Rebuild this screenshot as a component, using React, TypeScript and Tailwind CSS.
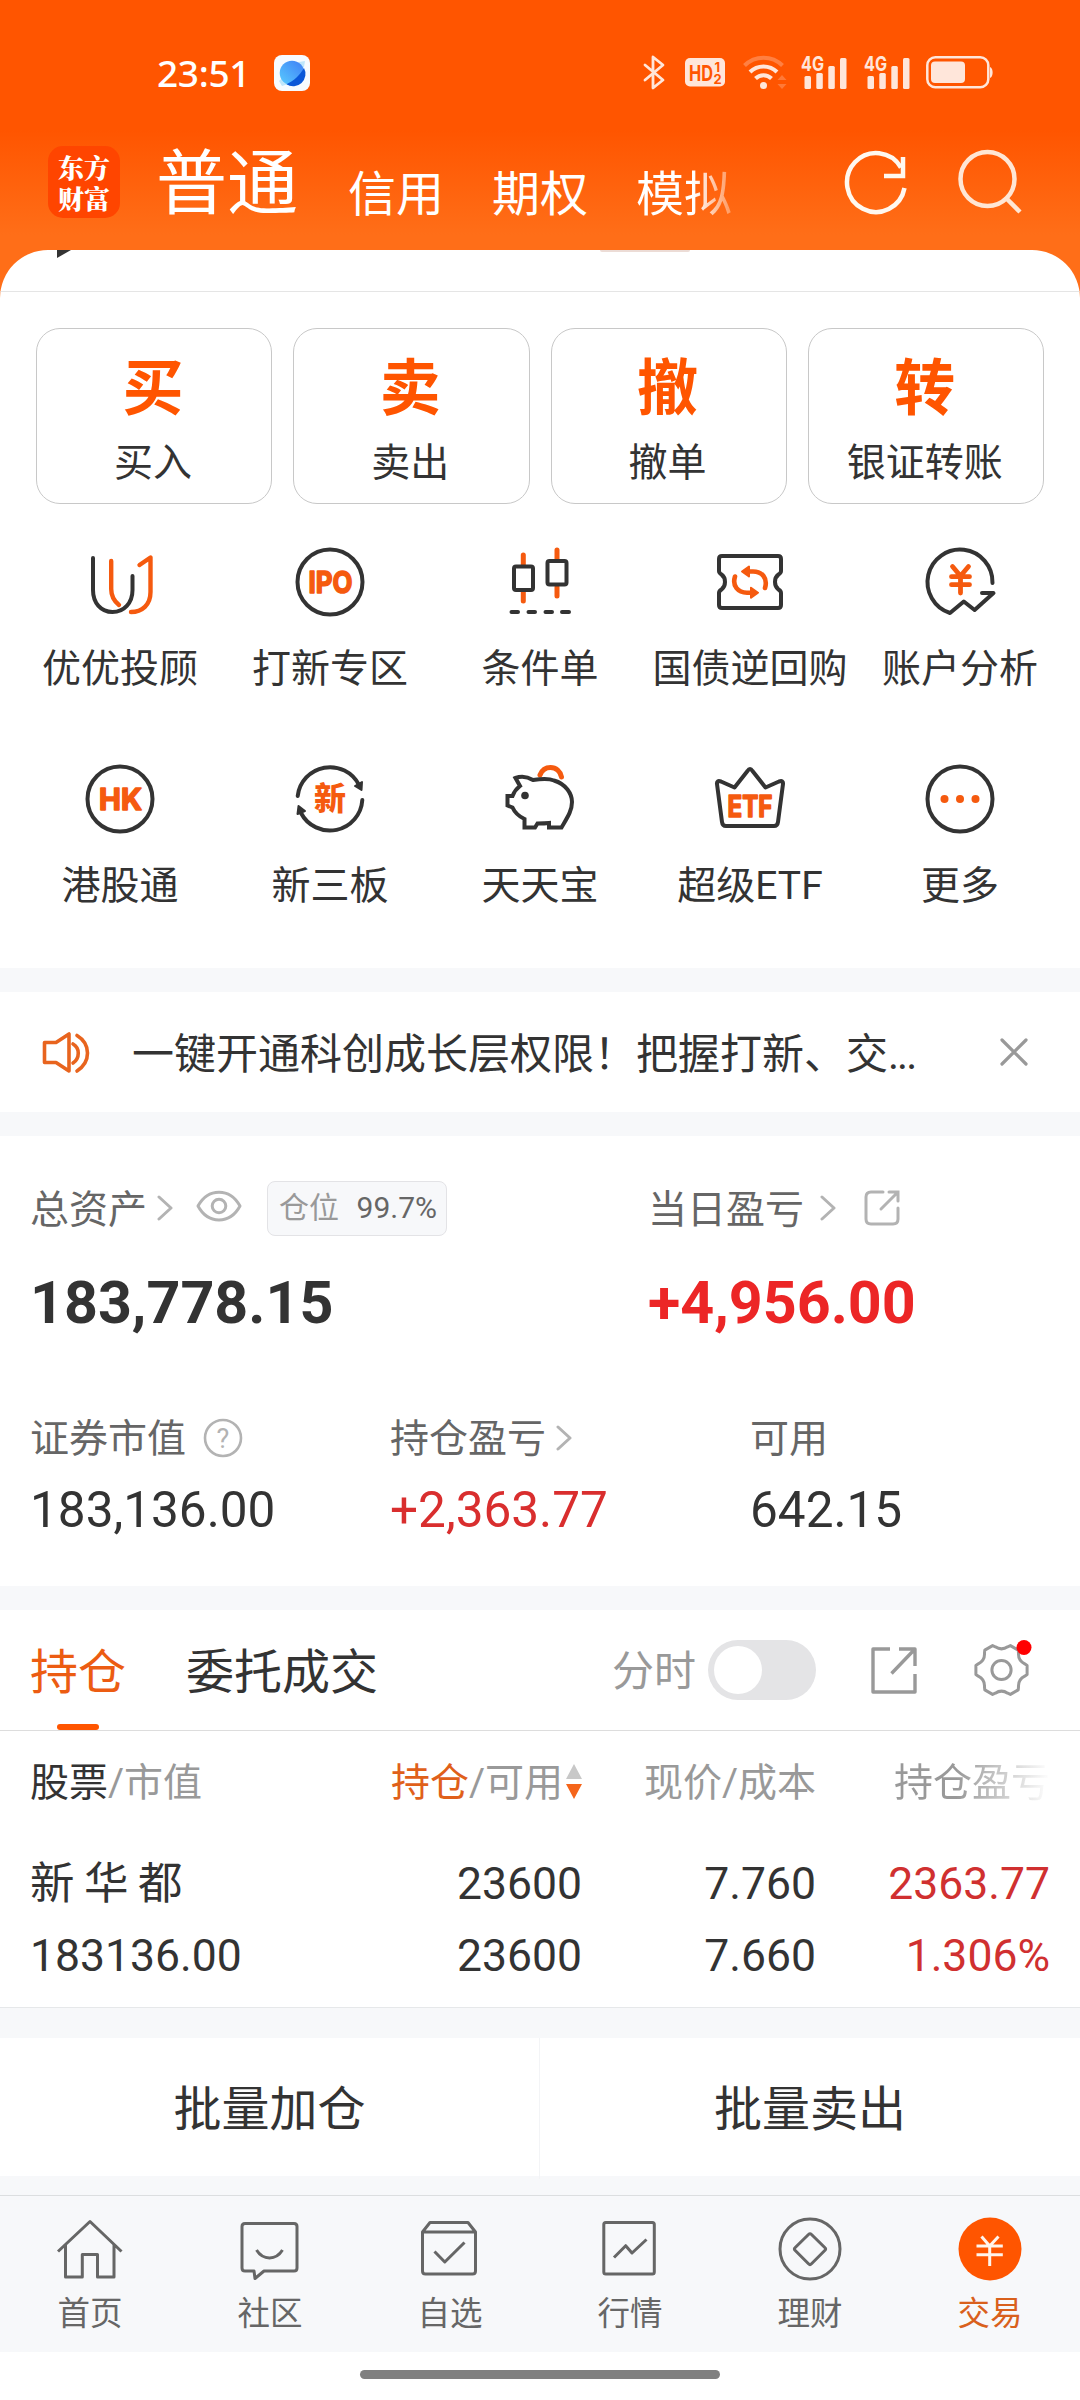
import type { ReactNode } from "react";

const DARK = "#333333";
const ORANGE = "#f55a0f";

const LATIN_FONT = { fontFamily: "Inter, Roboto, sans-serif" };
const CJK_FONT = { fontFamily: '"Noto Sans CJK SC", sans-serif' };

function StatusBar() {
  return (
    <div className="flex h-[128px] items-center pl-[157px] pt-[17px] pr-[86px] text-[#ffe6da]">
      <span className="w-[90px] font-['Noto_Sans'] text-[37px] font-medium leading-[40px] tracking-[-0.3px] text-white">23:51</span>
      <svg className="ml-[27px]" width="36" height="36" viewBox="0 0 36 36">
        <defs>
          <linearGradient id="planet" x1="0" y1="1" x2="1" y2="0">
            <stop offset="0" stopColor="#59ccff" />
            <stop offset="1" stopColor="#3f7df5" />
          </linearGradient>
        </defs>
        <rect width="36" height="36" rx="8" fill="#f7fbff" />
        <path d="M5 26L8 31L14 29L30 12L31 6L25 7Z" fill="#bfe6fb" />
        <circle cx="18" cy="18" r="12.3" fill="url(#planet)" />
        <path d="M30 13A12.3 12.3 0 0 1 12.5 29.2C20 26 26 20 30 13Z" fill="#0a57d8" />
      </svg>
      <div className="ml-auto flex items-center">
        <svg width="22" height="35" viewBox="0 0 22 35" fill="none" stroke="currentColor" strokeWidth="2.8" strokeLinejoin="round" strokeLinecap="round">
          <path d="M2 10L20 25L10 33V2L20 10L2 25" />
        </svg>
        <svg className="ml-5 overflow-visible" width="40" height="29" viewBox="0 0 40 29">
          <rect width="40" height="28.5" rx="5" fill="currentColor" />
          <g fill="#ff5500" style={LATIN_FONT} fontWeight="700">
            <text x="4" y="22.5" fontSize="22" textLength="24" lengthAdjust="spacingAndGlyphs">HD</text>
            <text x="29.5" y="13.5" fontSize="13">1</text>
            <text x="28.5" y="25.5" fontSize="13">2</text>
          </g>
        </svg>
        <svg className="ml-[18px]" width="44" height="35" viewBox="0 0 44 35" fill="none" stroke="currentColor" strokeWidth="4">
          <path d="M1.5 10.5C12 0 29 0 39.5 10.5" opacity=".3" />
          <path d="M7 17C14.5 9.500 26.500 9.500 34 17" />
          <path d="M12.500 23.500C17 19 24 19 28.500 23.500" />
          <circle cx="20.500" cy="30.500" r="3.500" fill="currentColor" stroke="none" />
          <path d="M39 20L43.500 25H34.500ZM39 34L43.500 29H34.500Z" fill="currentColor" stroke="none" opacity=".25" />
        </svg>
        <Signal className="ml-[14px] overflow-visible" />
        <Signal className="ml-[17px] overflow-visible" />
        <svg className="ml-4" width="68" height="33" viewBox="0 0 68 33">
          <rect x="1.300" y="1.300" width="61" height="30" rx="8" fill="none" stroke="currentColor" strokeWidth="2.500" />
          <rect x="5" y="5.500" width="34" height="21.500" rx="4" fill="currentColor" />
          <path d="M64 11C67.500 12 67.500 21 64 22Z" fill="currentColor" />
        </svg>
      </div>
    </div>
  );
}

function Signal({ className }: { className: string }) {
  return (
    <svg className={className} width="46" height="34" viewBox="0 0 46 34" fill="currentColor">
      <text x="0" y="15" fontSize="20" fontWeight="700" textLength="23" lengthAdjust="spacingAndGlyphs" style={LATIN_FONT}>4G</text>
      <rect x="3.500" y="20" width="6.500" height="13" rx="1.500" />
      <rect x="15.300" y="17" width="6.500" height="16" rx="1.500" />
      <rect x="27.300" y="10" width="6.500" height="23" rx="1.500" />
      <rect x="39" y="2" width="6.500" height="31" rx="1.500" />
    </svg>
  );
}

function Header() {
  return (
    <div className="flex h-[122px] items-start text-white">
      <div className="ml-12 mt-[18px] flex h-[72px] w-[72px] flex-col items-center justify-center rounded-[15px] bg-[#ff4500] font-['Noto_Serif_CJK_SC','Noto_Sans_CJK_SC',serif] text-[26px] font-black leading-[31px]">
        <span>东方</span>
        <span>财富</span>
      </div>
      <span className="ml-[36px] mt-[12px] text-[71px] leading-[88px]">普通</span>
      <nav className="ml-[50px] mt-[37px] flex gap-12 text-[48px] leading-[60px]">
        <span>信用</span>
        <span>期权</span>
        <span className="bg-linear-to-r from-white from-60% to-[#ffffff50] bg-clip-text text-transparent">模拟</span>
      </nav>
      <svg className="ml-[112px] mt-[20px]" width="64" height="68" viewBox="0 0 64 68" fill="none" stroke="#fff8f0" strokeWidth="4.500">
        <path d="M60.500 40A29 29.500 0 1 1 57 19.500" />
        <path d="M59 9V28H40" />
      </svg>
      <svg className="ml-[50px] mt-[24px] overflow-visible" width="64" height="64" viewBox="0 0 64 64" fill="none" stroke="#ffe6d4" strokeWidth="4.500">
        <circle cx="29.500" cy="27" r="27" />
        <path d="M48 46L62 60" />
      </svg>
    </div>
  );
}

const actions = [
  { glyph: "买", label: "买入" },
  { glyph: "卖", label: "卖出" },
  { glyph: "撤", label: "撤单" },
  { glyph: "转", label: "银证转账" },
];

function ActionCards() {
  return (
    <div className="grid grid-cols-4 gap-[21px] px-9 pt-9">
      {actions.map((a) => (
        <button key={a.label} className="flex h-[176px] flex-col items-center rounded-[24px] border border-[#c8c8c8] pt-[22px] pr-[2px]">
          <span className="text-[61px] font-bold leading-[76px] text-[#ff5500]">{a.glyph}</span>
          <span className="mt-[10px] text-[39px] leading-[52px] text-[#333]">{a.label}</span>
        </button>
      ))}
    </div>
  );
}

function MenuIcon({ children }: { children: ReactNode }) {
  return (
    <svg width="72" height="72" viewBox="0 0 72 72" fill="none" stroke={DARK} strokeWidth="4" strokeLinecap="round" strokeLinejoin="round" className="overflow-visible">
      {children}
    </svg>
  );
}

const roundText = {
  fill: ORANGE,
  stroke: ORANGE,
  strokeWidth: 1.6,
  fontWeight: 700,
  fontSize: 30,
  lengthAdjust: "spacingAndGlyphs" as const,
  style: LATIN_FONT,
};

const menu: { label: string; icon: ReactNode }[] = [
  {
    label: "优优投顾",
    icon: (
      <>
        <path d="M9 12V44C9 57 17 66 28.500 66S48.500 57 48.500 44V30" />
        <path d="M27.200 15V43C27.200 50 30 55 35 59M55.500 19L66.500 11.500V46C66.500 59 58 66 47 66" stroke={ORANGE} strokeWidth="4.400" />
      </>
    ),
  },
  {
    label: "打新专区",
    icon: (
      <>
        <circle cx="36" cy="36" r="32.500" />
        <text x="14.500" y="46.700" textLength="44" {...roundText}>IPO</text>
      </>
    ),
  },
  {
    label: "条件单",
    icon: (
      <>
        <path d="M19.300 9V19M19.300 45V55M53 4V13M53 41V50" stroke={ORANGE} strokeWidth="5" />
        <rect x="10" y="20.500" width="19" height="23.500" rx="2" />
        <rect x="43.500" y="15" width="19" height="23.500" rx="2" />
        <path d="M7.500 66H14M24.500 66H31M41.500 66H48M58 66H65" />
      </>
    ),
  },
  {
    label: "国债逆回购",
    icon: (
      <>
        <path d="M8 10H64Q67 10 67 13V25Q67 27 64.500 28.500Q61 31 61 36Q61 41 64.500 43.500Q67 45 67 47V59Q67 62 64 62H8Q5 62 5 59V47Q5 45 7.500 43.500Q11 41 11 36Q11 31 7.500 28.500Q5 27 5 25V13Q5 10 8 10Z" />
        <g stroke={ORANGE} strokeWidth="4.600">
          <path d="M34 25.500H39C48 25.500 54 32 51 42M38 46.700H33C24 46.700 18 40 21 30.500" />
          <path d="M35 20.500V30.500L28 25.500ZM37 41.700V51.700L44 46.700Z" fill={ORANGE} strokeWidth="2" />
        </g>
      </>
    ),
  },
  {
    label: "账户分析",
    icon: (
      <>
        <path d="M68.500 37A32.500 32.500 0 1 0 26 67L39.800 55.500L50.600 64L69.500 47H58" />
        <path d="M28.500 20.500L36.500 30L44.500 20.500M27.500 30.700H45.500M27.500 38.700H45.500M36.500 30V47" stroke={ORANGE} strokeWidth="4.800" />
      </>
    ),
  },
  {
    label: "港股通",
    icon: (
      <>
        <circle cx="36" cy="36" r="32.500" />
        <text x="15" y="46.700" textLength="43" {...roundText}>HK</text>
      </>
    ),
  },
  {
    label: "新三板",
    icon: (
      <>
        <path d="M3.700 33A32.500 32.500 0 0 1 65 22M68.300 37A32.500 32.500 0 0 1 7 50" />
        <path d="M61 23L68 19L67.500 27ZM11 48L3.500 51L4.500 43Z" fill={DARK} strokeWidth="2" />
        <text x="36" y="47" fontSize="32" fontWeight="900" textAnchor="middle" fill={ORANGE} stroke="none" style={CJK_FONT}>新</text>
      </>
    ),
  },
  {
    label: "天天宝",
    icon: (
      <>
        <path d="M36 12C38 7 42 4.500 46.500 4.500C52 4.500 56.500 8.500 57.500 14" stroke={ORANGE} strokeWidth="5" />
        <path strokeLinejoin="miter" d="M16 23L11.500 15C17 13 24 14 29 17C36 16 44 15 50 17.500C62 21 68 31 68 39C68 48 63 55 57.500 64.500H45V60C41 60.500 37 60.500 33.500 60.500L31 64.500H20.500V56C14 53 11 50 8.500 44.500L3.500 42.500V33H8.500C10 29 12 26 16 23Z" />
        <circle cx="21" cy="32.500" r="3.800" fill={DARK} stroke="none" />
      </>
    ),
  },
  {
    label: "超级ETF",
    icon: (
      <>
        <path d="M33.500 8Q36 4 38.500 8L51.500 24.500L65 18.500Q69.500 17 69 21L64 59Q63.500 63 60 63H12Q8.500 63 8 59L3 21Q2.500 17 7 18.500L20.500 24.500Z" />
        <text x="13.500" y="53.500" textLength="45" {...roundText}>ETF</text>
      </>
    ),
  },
  {
    label: "更多",
    icon: (
      <>
        <circle cx="36" cy="36" r="32.500" />
        <g fill={ORANGE} stroke="none">
          <circle cx="20.500" cy="36" r="4" />
          <circle cx="36" cy="36" r="4" />
          <circle cx="51.500" cy="36" r="4" />
        </g>
      </>
    ),
  },
];

function MenuGrid() {
  return (
    <div className="grid grid-cols-5 gap-y-[41px] px-[15px] pb-[29px] pt-[42px]">
      {menu.map((m) => (
        <div key={m.label} className="flex h-[176px] flex-col items-center">
          <MenuIcon>{m.icon}</MenuIcon>
          <span className="mt-[25px] whitespace-nowrap text-[39px] leading-[52px] text-[#333]">{m.label}</span>
        </div>
      ))}
    </div>
  );
}

function Notice() {
  return (
    <div className="flex h-[120px] items-center bg-white pl-[42px] pr-[52px]">
      <svg width="48" height="44" viewBox="0 0 48 44" fill="none" stroke="#e8641e" strokeWidth="3.600" strokeLinecap="round" strokeLinejoin="round">
        <path d="M2.500 12.500H14L27 4V41L14 32.500H2.500Z" />
        <path d="M31 14C38 18 38 28 31 33M35 5.500C49 14 49 32 35 41" />
      </svg>
      <span className="ml-[42px] mt-[5px] flex-1 whitespace-nowrap text-[42px] leading-[60px] text-[#333]">
        一键开通科创成长层权限！把握打新、交<span className="tracking-[-2px]">...</span>
      </span>
      <svg width="28" height="28" viewBox="0 0 28 28" stroke="#999" strokeWidth="3.200" strokeLinecap="round">
        <path d="M2 2L26 26M26 2L2 26" />
      </svg>
    </div>
  );
}

function Chevron({ className }: { className: string }) {
  return (
    <svg className={className} width="16" height="26" viewBox="0 0 16 26" fill="none" stroke="#b3b3b3" strokeWidth="3" strokeLinecap="round" strokeLinejoin="round">
      <path d="M2 2L14 13L2 24" />
    </svg>
  );
}

function Assets() {
  return (
    <section className="h-[450px] bg-white pl-[30px]">
      <div className="flex pt-[44px]">
        <div className="w-[618px]">
          <div className="flex h-[56px] items-center text-[39px] leading-[56px] text-[#666]">
            <span className="mt-[4px]">总资产</span>
            <Chevron className="ml-[10px]" />
            <svg className="ml-[23px] mt-[-4px]" width="46" height="32" viewBox="0 0 46 32" fill="none" stroke="#b3b3b3" strokeWidth="3">
              <path d="M2 16C12 -2.500 34 -2.500 44 16C34 34.500 12 34.500 2 16Z" strokeLinejoin="round" />
              <circle cx="23" cy="16" r="6.800" />
            </svg>
            <span className="ml-[25px] flex h-[55px] w-[180px] items-center justify-between rounded-lg border border-[#e3e3e6] bg-[#f7f8fa] pl-[11px] pr-[9px] text-[30px] leading-[40px]">
              <span className="text-[#999]">仓位</span>
              <span>99.7%</span>
            </span>
          </div>
          <div className="mt-[31px] text-[59.2px] font-bold leading-[72px] text-[#333]">183,778.15</div>
        </div>
        <div>
          <div className="flex h-[56px] items-center text-[39px] leading-[56px] text-[#666]">
            <span className="mt-[4px]">当日盈亏</span>
            <Chevron className="ml-[16px]" />
            <svg className="ml-[28px]" width="36" height="36" viewBox="0 0 36 36" fill="none" stroke="#b3b3b3" strokeWidth="3" strokeLinecap="round">
              <path d="M19 2H7Q2 2 2 7V29Q2 34 7 34H29Q34 34 34 29V18M25 2H34V11M33 3L17 19" />
            </svg>
          </div>
          <div className="mt-[31px] text-[59.2px] font-bold leading-[72px] text-[#ec2626]">+4,956.00</div>
        </div>
      </div>
      <div className="mt-[72px] flex">
        <div className="w-[360px]">
          <div className="flex h-[56px] items-center text-[39px] leading-[56px] text-[#666]">
            <span>证券市值</span>
            <svg className="ml-[17px] mt-[-3px]" width="40" height="40" viewBox="0 0 40 40">
              <circle cx="20" cy="20" r="18" fill="none" stroke="#b3b3b3" strokeWidth="2.600" />
              <text x="20" y="29.500" textAnchor="middle" fontSize="27" fill="#b3b3b3" style={{ fontFamily: "Roboto, sans-serif" }}>?</text>
            </svg>
          </div>
          <div className="mt-[15px] text-[49.5px] leading-[56px] text-[#333]">183,136.00</div>
        </div>
        <div className="w-[360px]">
          <div className="flex h-[56px] items-center text-[39px] leading-[56px] text-[#666]">
            <span>持仓盈亏</span>
            <Chevron className="ml-[10px] mt-[-3px]" />
          </div>
          <div className="mt-[15px] text-[49.5px] leading-[56px] text-[#d92e2e]">+2,363.77</div>
        </div>
        <div>
          <div className="h-[56px] text-[39px] leading-[56px] text-[#666]">可用</div>
          <div className="mt-[15px] text-[49.5px] leading-[56px] text-[#333]">642.15</div>
        </div>
      </div>
    </section>
  );
}

// Outline with six flat teeth joined by concave curves.
function gearPath(cx: number, cy: number) {
  const at = (deg: number, r: number) => {
    const a = (deg * Math.PI) / 180;
    return `${(cx + r * Math.cos(a)).toFixed(1)} ${(cy + r * Math.sin(a)).toFixed(1)}`;
  };
  let d = `M${at(-10, 26)}`;
  for (let k = 0; k < 6; k++) {
    const t = k * 60;
    d += `L${at(t + 10, 26)}L${at(t + 15, 24)}Q${at(t + 30, 19)} ${at(t + 45, 24)}L${at(t + 50, 26)}`;
  }
  return d + "Z";
}

function HoldingsTabs() {
  return (
    <div className="flex h-[121px] border-b border-[#dddddd] bg-white pl-[30px]">
      <div className="relative h-[120px] text-[48px] leading-[60px] text-[#ec5c12]">
        <span className="block pt-[33px]">持仓</span>
        <span className="absolute bottom-0 left-[27px] h-[6px] w-[42px] rounded-full bg-[#ff5500]" />
      </div>
      <span className="ml-[60px] pt-[33px] text-[48px] leading-[60px] text-[#333]">委托成交</span>
      <div className="ml-auto flex h-[120px] items-center pr-[48px]">
        <span className="mt-[4px] text-[42px] leading-[60px] text-[#999]">分时</span>
        <span className="ml-[12px] flex h-[60px] w-[108px] items-center rounded-full bg-[#e4e4e6] pl-[6px]">
          <span className="h-[48px] w-[48px] rounded-full bg-white" />
        </span>
        <svg className="ml-[55px]" width="47" height="47" viewBox="0 0 47 47" fill="none" stroke="#999" strokeWidth="3.400" strokeLinejoin="round">
          <path d="M19 2H2V45H44V27M28 2H44V19M43 3L20.500 26.500" />
        </svg>
        <svg className="ml-[56px]" width="58" height="62" viewBox="0 0 58 62" fill="none" stroke="#999" strokeWidth="3" strokeLinejoin="round">
          <path d={gearPath(27.5, 31)} />
          <circle cx="27.500" cy="31" r="9.600" />
          <circle cx="50" cy="8.500" r="7.500" fill="#ff0000" stroke="none" />
        </svg>
      </div>
    </div>
  );
}

function HoldingsTable() {
  const cols = "grid grid-cols-[301px_251px_234px_234px]";
  return (
    <div className="h-[277px] border-b border-[#e6e8ea] bg-white pl-[30px]">
      <div className={`${cols} pt-[24px] text-[39px] leading-[56px] text-[#999]`}>
        <div>
          <span className="text-[#333]">股票</span>/市值
        </div>
        <div className="flex items-center justify-end">
          <span className="text-[#e0601a]">持仓</span>
          <span>/可用</span>
          <svg className="ml-[3px] mt-[-2px]" width="16" height="36" viewBox="0 0 16 36">
            <path d="M8 0L16 15H0Z" fill="#c8c8c8" />
            <path d="M0 20H16L8 35Z" fill="#f5651a" />
          </svg>
        </div>
        <div className="text-right">现价/成本</div>
        <div className="text-right">
          <span className="bg-linear-to-r from-[#999] from-40% to-[#99999900] bg-clip-text text-transparent">持仓盈亏</span>
        </div>
      </div>
      <div className={`${cols} pt-[43px] text-[44.5px] leading-[60px] text-[#333]`}>
        <div className="[word-spacing:-1.5px]">新 华 都</div>
        <div className="text-right">23600</div>
        <div className="text-right">7.760</div>
        <div className="text-right text-[#d03030]">2363.77</div>
      </div>
      <div className={`${cols} pt-[12px] text-[44.5px] leading-[60px] text-[#333]`}>
        <div>183136.00</div>
        <div className="text-right">23600</div>
        <div className="text-right">7.660</div>
        <div className="text-right text-[#d03030]">1.306%</div>
      </div>
    </div>
  );
}

function TabIcon({ children }: { children: ReactNode }) {
  return (
    <svg width="72" height="72" viewBox="0 0 72 72" fill="none" stroke="#666" strokeWidth="3" strokeLinejoin="round">
      {children}
    </svg>
  );
}

const tabs: { label: string; active?: boolean; icon: ReactNode }[] = [
  { label: "首页", icon: <path d="M4 38.500L36 8.500L67.500 38.500M11.500 32V64H28.300V41.500H43.500V64H60V32" /> },
  {
    label: "社区",
    icon: <path d="M11 10.500H60Q63 10.500 63 13.500V55Q63 58 60 58H30L21 65.500L20 58H11Q8 58 8 55V13.500Q8 10.500 11 10.500ZM22.500 37C29 47.500 42 47.500 48.500 37" />,
  },
  {
    label: "自选",
    icon: <path d="M8.500 19L16 9.500H54L61.500 19V58Q61.500 61 58.500 61H11.500Q8.500 61 8.500 58ZM8.500 19H61.500M20.500 38.500L30.800 49L50.500 29.500" />,
  },
  {
    label: "行情",
    icon: (
      <>
        <rect x="9.800" y="9.500" width="50.500" height="51.500" rx="2" />
        <path d="M20 44.500L31.700 32.700L38 40L52.500 26.500" />
      </>
    ),
  },
  {
    label: "理财",
    icon: (
      <>
        <circle cx="36" cy="36" r="30" />
        <path d="M34.500 21.500Q36 20 37.500 21.500L51 34.800Q52.300 36 51 37.300L37.500 50.800Q36 52.300 34.500 50.800L21 37.300Q19.700 36 21 34.800Z" />
      </>
    ),
  },
  {
    label: "交易",
    active: true,
    icon: (
      <>
        <circle cx="36" cy="36" r="31.500" fill="#ff5500" stroke="none" />
        <path d="M27.500 23.500L35.700 33L44.500 23.500M22.500 33H48.800M22.500 41.700H48.800M35.700 33V53" stroke="#fff4ec" />
      </>
    ),
  },
];

function BottomNav() {
  return (
    <>
      <nav className="grid h-[157px] grid-cols-6 border-t border-[#dcdee0] bg-[#f7f8fa] pt-[17px]">
        {tabs.map((t) => (
          <div key={t.label} className="flex flex-col items-center">
            <TabIcon>{t.icon}</TabIcon>
            <span className={t.active ? "mt-[7px] text-[32.5px] leading-[44px] text-[#d9601c]" : "mt-[7px] text-[32.5px] leading-[44px] text-[#666]"}>{t.label}</span>
          </div>
        ))}
      </nav>
      <div className="h-[48px] bg-white pt-[18px]">
        <div className="mx-auto h-[9px] w-[360px] rounded-full bg-[#808080]" />
      </div>
    </>
  );
}

export default function App() {
  return (
    <main className="h-[2400px] w-[1080px] overflow-hidden bg-[#f7f8fa] font-[Roboto,'Noto_Sans_CJK_SC',sans-serif]">
      <div className="bg-[linear-gradient(to_bottom,#ff5500_130px,#ff6e18_235px)]">
        <div className="h-[250px]">
          <StatusBar />
          <Header />
        </div>
        <div className="overflow-hidden rounded-t-[48px] bg-white">
          <div className="flex h-[42px] items-start border-b border-[#e5e5e5]">
            <svg className="ml-[57px]" width="14" height="8" viewBox="0 0 14 8">
              <path d="M0 0H14L0 8Z" fill="#333" />
            </svg>
            <span className="ml-[529px] h-[2px] w-[90px] rounded-b-full bg-[#ecdcd6]" />
          </div>
          <ActionCards />
          <MenuGrid />
        </div>
      </div>
      <div className="mt-6">
        <Notice />
      </div>
      <div className="mt-6">
        <Assets />
      </div>
      <div className="mt-6">
        <HoldingsTabs />
        <HoldingsTable />
      </div>
      <div className="mb-[19px] mt-[30px] grid h-[138px] grid-cols-2 bg-white text-[48px] leading-[138px] text-[#333]">
        <div className="border-r border-[#f3f4f6] pt-[3px] text-center">批量加仓</div>
        <div className="pt-[3px] text-center">批量卖出</div>
      </div>
      <BottomNav />
    </main>
  );
}
